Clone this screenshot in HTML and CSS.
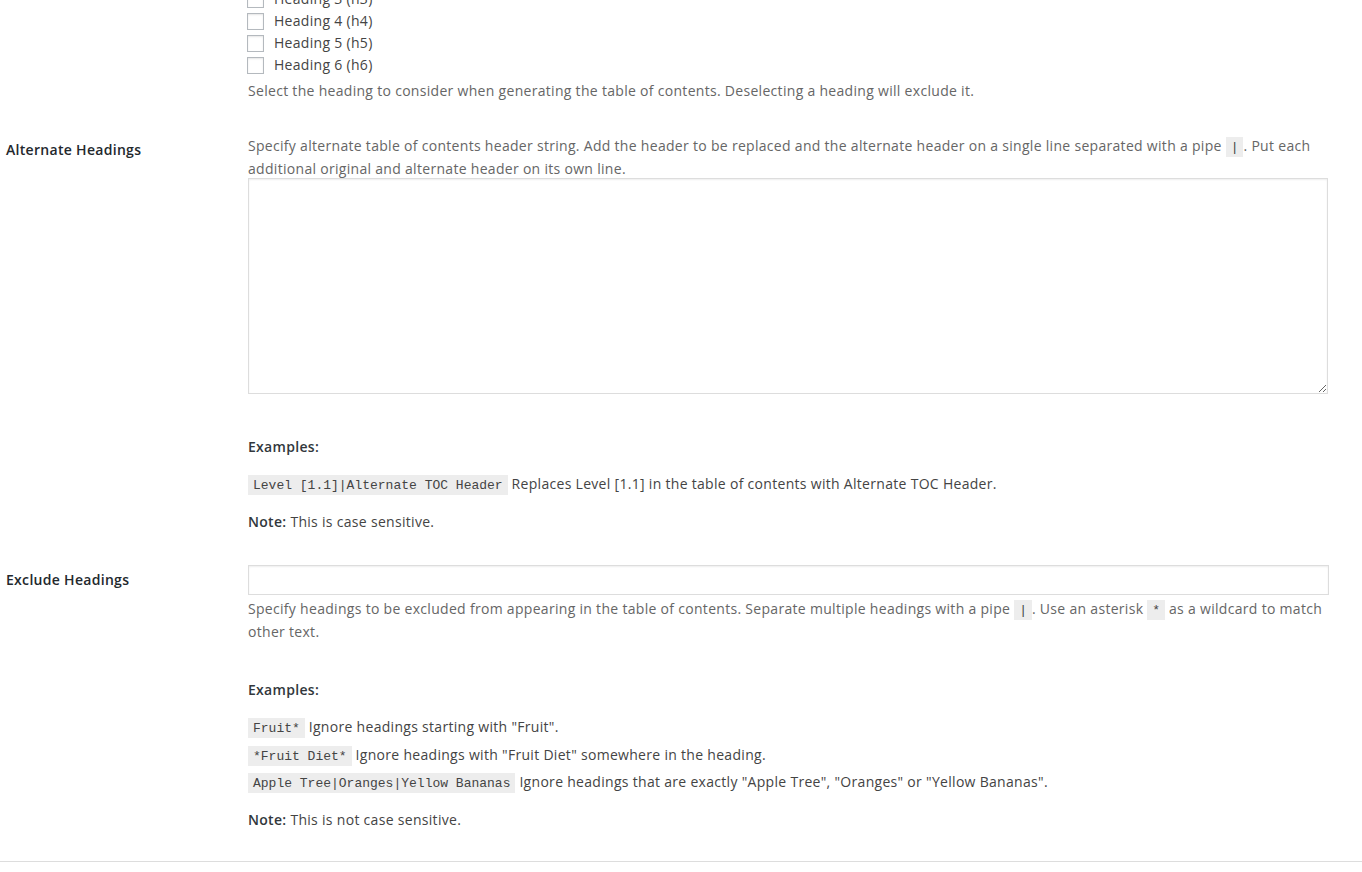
FILE: index.html
```html
<!DOCTYPE html>
<html lang="en">
<head>
    <meta charset="UTF-8">
    <meta name="viewport" content="width=device-width, initial-scale=1.0">
    <title>Table of Contents Settings</title>
    <link rel="stylesheet" href="styles.css">
</head>
<body>

<div class="settings">

    <!-- Headings to consider -->
    <div class="setting-row row-headings">
        <div class="setting-label"></div>
        <div class="setting-field">
            <ul class="check-list">
                <li><span class="checkbox"></span>Heading 3 (h3)</li>
                <li><span class="checkbox"></span>Heading 4 (h4)</li>
                <li><span class="checkbox"></span>Heading 5 (h5)</li>
                <li><span class="checkbox"></span>Heading 6 (h6)</li>
            </ul>
            <p class="description desc-after-list">Select the heading to consider when generating the table of contents. Deselecting a heading will exclude it.</p>
        </div>
    </div>

    <!-- Alternate Headings -->
    <div class="setting-row">
        <div class="setting-label">Alternate Headings</div>
        <div class="setting-field">
            <p class="description">Specify alternate table of contents header string. Add the header to be replaced and the alternate header on a single line separated with a pipe <code>|</code>. Put each additional original and alternate header on its own line.</p>
            <textarea class="large-text" rows="10"></textarea>
            <p class="examples-title"><strong>Examples:</strong></p>
            <p class="example-line"><code>Level [1.1]|Alternate TOC Header</code> Replaces Level [1.1] in the table of contents with Alternate TOC Header.</p>
            <p class="note"><strong>Note:</strong> This is case sensitive.</p>
        </div>
    </div>

    <!-- Exclude Headings -->
    <div class="setting-row">
        <div class="setting-label label-input">Exclude Headings</div>
        <div class="setting-field">
            <input type="text" class="large-input">
            <p class="description desc-after-input">Specify headings to be excluded from appearing in the table of contents. Separate multiple headings with a pipe <code>|</code>. Use an asterisk <code>*</code> as a wildcard to match other text.</p>
            <p class="examples-title examples-gap"><strong>Examples:</strong></p>
            <p class="example-list">
                <code>Fruit*</code> Ignore headings starting with "Fruit".<br>
                <code>*Fruit Diet*</code> Ignore headings with "Fruit Diet" somewhere in the heading.<br>
                <code>Apple Tree|Oranges|Yellow Bananas</code> Ignore headings that are exactly "Apple Tree", "Oranges" or "Yellow Bananas".
            </p>
            <p class="note note-last"><strong>Note:</strong> This is not case sensitive.</p>
        </div>
    </div>

</div>

<hr class="divider">

</body>
</html>
```

FILE: styles.css
```css
* {
    margin: 0;
    padding: 0;
    box-sizing: border-box;
}

body {
    background: #fff;
    color: #444;
    font-family: "Segoe UI", "Open Sans", sans-serif;
    font-size: 14px;
    letter-spacing: 0.3px;
    overflow: hidden;
}

/* Settings table */
.settings {
    margin-top: -27px;
    padding-left: 6px;
}

.setting-row {
    display: grid;
    grid-template-columns: 242px 1fr;
    padding: 15px 0 17px;
}

.setting-label {
    padding-top: 5px;
    line-height: 22px;
    font-weight: 600;
    color: #23282d;
}

.label-input {
    padding-top: 4px;
}

.setting-field {
    width: 1082px;
}

/* Checkbox list */
.check-list {
    list-style: none;
}

.check-list li {
    display: flex;
    align-items: center;
    gap: 10px;
    height: 22px;
    line-height: 22px;
}

.checkbox {
    width: 17px;
    height: 17px;
    margin-left: -1px;
    border: 1px solid #b4b9be;
    background: #fff;
    box-shadow: inset 0 1px 2px rgba(0, 0, 0, 0.1);
}

/* Text */
.description {
    line-height: 23px;
    color: #666;
}

.desc-after-list {
    margin-top: 3px;
}

.desc-after-input {
    margin-top: 2px;
}

code {
    font-family: Consolas, "Liberation Mono", monospace;
    font-size: 13px;
    line-height: 1;
    letter-spacing: 0;
    padding: 3px 5px 2px;
    background: rgba(0, 0, 0, 0.07);
    color: #444;
}

strong {
    font-weight: 600;
    color: #32373c;
}

.examples-title {
    margin-top: 41px;
    line-height: 23px;
}

.examples-gap {
    margin-top: 35px;
}

.example-line {
    margin-top: 14px;
    line-height: 23px;
}

.example-list {
    margin-top: 12px;
    line-height: 27.5px;
}

.note {
    margin-top: 15px;
    line-height: 23px;
}

.note-last {
    margin-top: 12px;
}

/* Form controls */
textarea.large-text {
    display: block;
    width: 1080px;
    height: 216px;
    margin-top: -2px;
    border: 1px solid #ddd;
    box-shadow: inset 0 1px 2px rgba(0, 0, 0, 0.07);
    background: #fff;
    font-family: inherit;
    font-size: 14px;
    outline: none;
}

.large-input {
    display: block;
    width: 1081px;
    height: 30px;
    border: 1px solid #ddd;
    box-shadow: inset 0 1px 2px rgba(0, 0, 0, 0.07);
    background: #fff;
    outline: none;
    font-family: inherit;
    font-size: 14px;
}

/* Bottom divider */
.divider {
    margin-top: 13px;
    border: none;
    border-top: 1px solid #ddd;
}
```
